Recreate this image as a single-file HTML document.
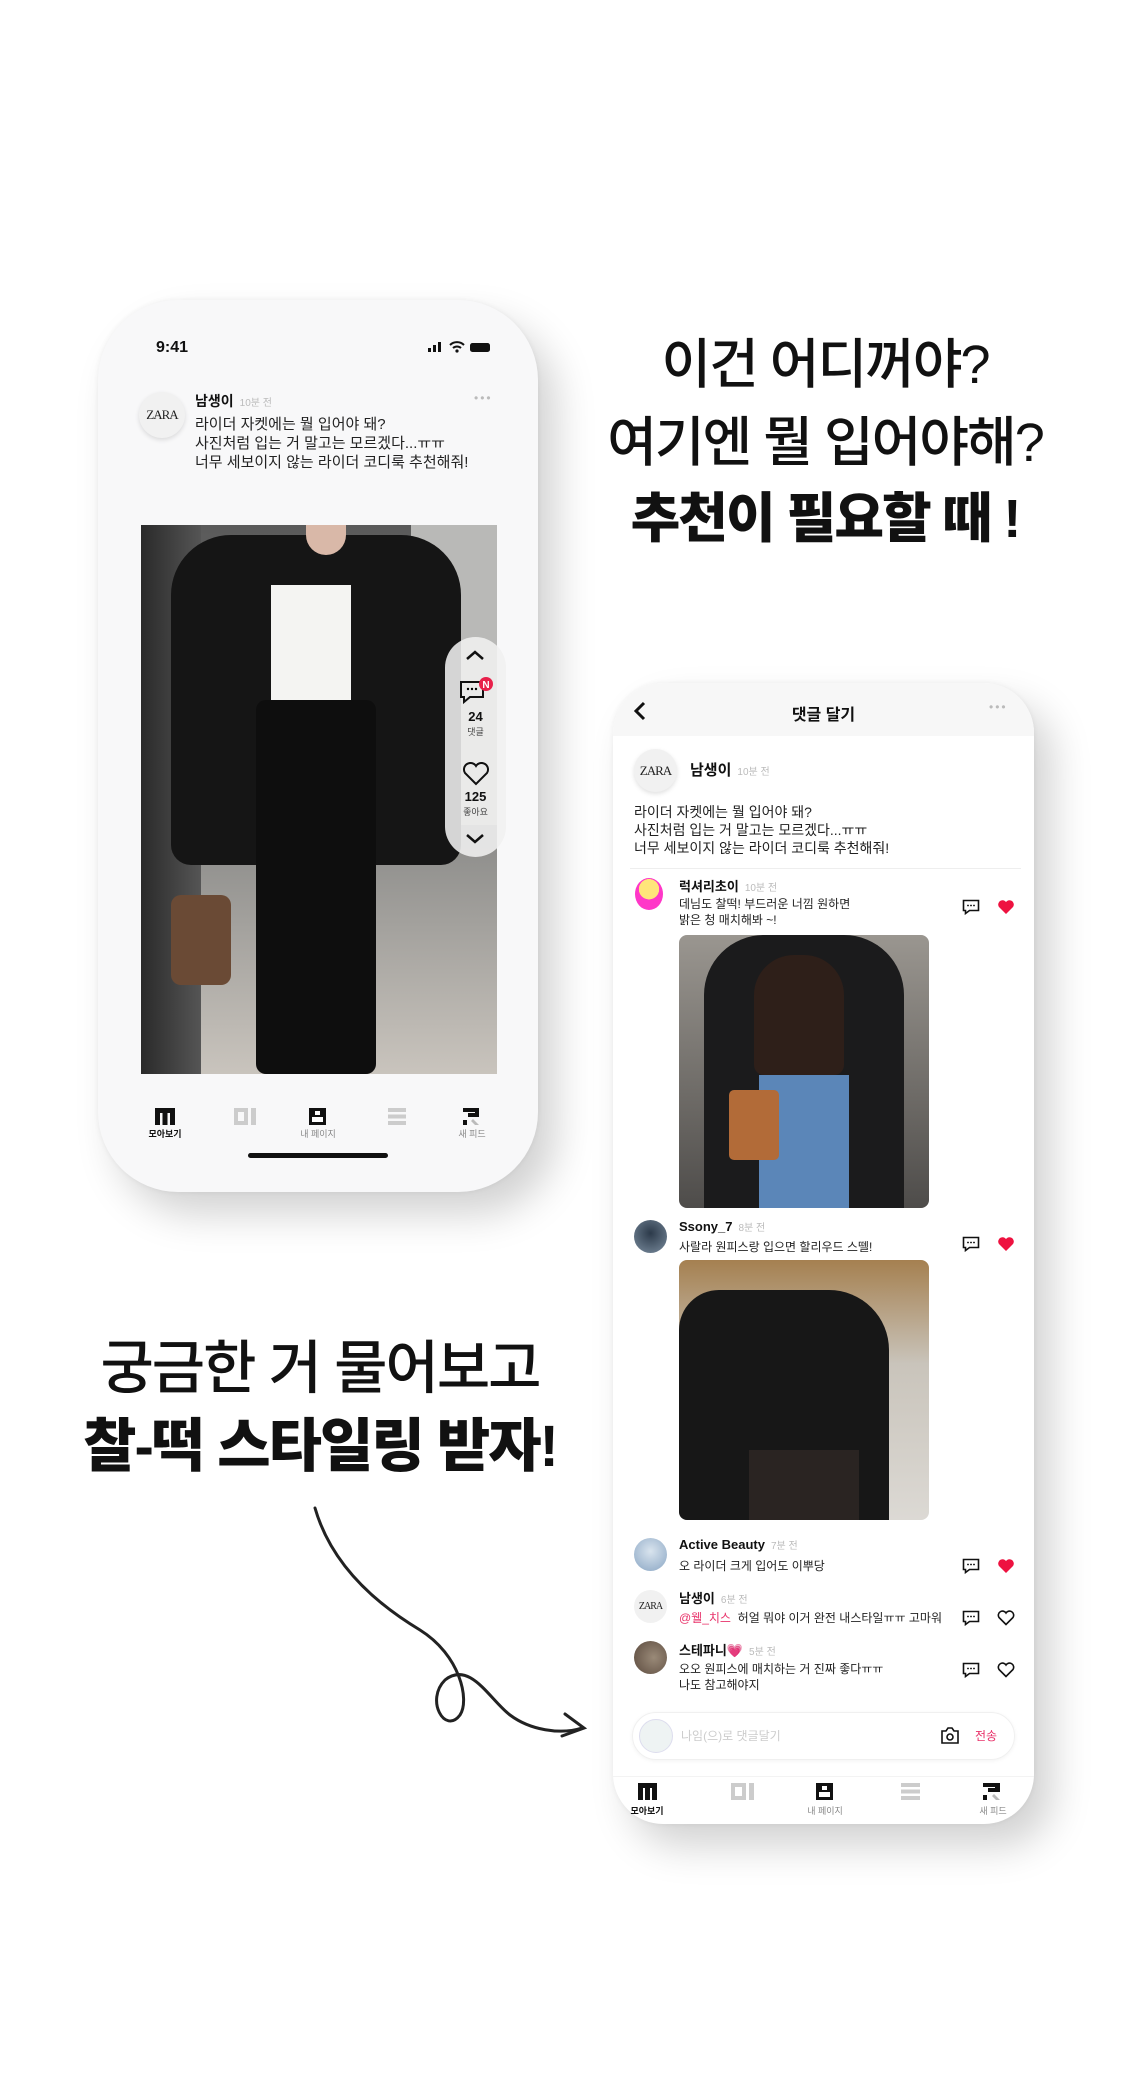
<!DOCTYPE html>
<html><head><meta charset="utf-8">
<style>
*{margin:0;padding:0;box-sizing:border-box}
body{width:1125px;height:2100px;background:#fff;position:relative;overflow:hidden;font-family:"Liberation Sans","Noto Sans CJK KR",sans-serif;color:#111}
.a{position:absolute}
.phone{position:absolute;background:#f7f7f8;box-shadow:18px 22px 40px rgba(0,0,0,.18),0 0 6px rgba(0,0,0,.06)}
.h{font-weight:500;font-size:54px;text-align:center;letter-spacing:-2px;line-height:1}
.t{font-size:15px;line-height:19px;color:#222;white-space:nowrap}
.nm{font-weight:700;font-size:14px;color:#111}
.tm{font-size:10px;color:#bbb;margin-left:6px;font-weight:400}
.av{position:absolute;border-radius:50%;background:#f1f1f1;box-shadow:0 2px 5px rgba(0,0,0,.12);font-family:"Liberation Serif",serif;font-size:13px;display:flex;align-items:center;justify-content:center;letter-spacing:-1px;color:#222}
.nl{position:absolute;font-size:9px;color:#888;text-align:center;width:60px}
</style></head><body>

<div class="a h" style="left:560px;top:338px;width:530px">이건 어디꺼야?</div>
<div class="a h" style="left:560px;top:416px;width:530px">여기엔 뭘 입어야해?</div>
<div class="a h" style="left:560px;top:492px;width:530px;font-weight:900">추천이 필요할 때 !</div>

<div class="a h" style="left:40px;top:1340px;width:560px;font-size:58px">궁금한 거 물어보고</div>
<div class="a h" style="left:40px;top:1418px;width:560px;font-size:58px;font-weight:900">찰-떡 스타일링 받자!</div>

<svg class="a" style="left:310px;top:1500px" width="280" height="240" viewBox="0 0 280 240">
<path d="M5 8 C20 60 60 100 110 130 C150 155 160 200 150 215 C135 235 115 200 135 180 C160 160 180 200 200 215 C220 230 250 235 272 228" fill="none" stroke="#222" stroke-width="3" stroke-linecap="round"/>
<path d="M255 214 L274 228 L252 236" fill="none" stroke="#222" stroke-width="3" stroke-linecap="round"/>
</svg>

<!-- LEFT PHONE -->
<div class="phone" style="left:98px;top:300px;width:440px;height:892px;border-radius:80px;background:#f8f8f9">
  <div class="a" style="left:58px;top:39px;font-weight:700;font-size:16px">9:41</div>
  <svg class="a" style="left:330px;top:40px" width="70" height="14"><rect x="0" y="8" width="3" height="4" fill="#111"/><rect x="5" y="5" width="3" height="7" fill="#111"/><rect x="10" y="2" width="3" height="10" fill="#111"/><path d="M22 5a10 10 0 0 1 14 0M25 8a6 6 0 0 1 8 0" stroke="#111" stroke-width="2" fill="none"/><circle cx="29" cy="11" r="1.6" fill="#111"/><rect x="42" y="3" width="20" height="9" rx="2.5" fill="#111"/></svg>
  <div class="av" style="left:41px;top:92px;width:46px;height:46px">ZARA</div>
  <div class="a nm" style="left:97px;top:91px">남생이<span class="tm">10분 전</span></div>
  <div class="a" style="left:376px;top:91px;color:#bbb;font-size:12px;letter-spacing:2px">•••</div>
  <div class="a t" style="left:97px;top:115px">라이더 자켓에는 뭘 입어야 돼?<br>사진처럼 입는 거 말고는 모르겠다...ㅠㅠ<br>너무 세보이지 않는 라이더 코디룩 추천해줘!</div>
  <div class="a" style="left:43px;top:225px;width:356px;height:549px;overflow:hidden;background:linear-gradient(180deg,#5a5a5a,#8a8a88 55%,#c9c4bd)">
    <div class="a" style="left:0;top:0;width:60px;height:549px;background:linear-gradient(90deg,#2a2a2a,#555)"></div>
    <div class="a" style="left:270px;top:0;width:86px;height:300px;background:#b9b9b7"></div>
    <div class="a" style="left:30px;top:10px;width:290px;height:330px;background:#151515;border-radius:60px 60px 20px 20px"></div>
    <div class="a" style="left:165px;top:0;width:40px;height:30px;background:#d9b8a8;border-radius:0 0 20px 20px"></div>
    <div class="a" style="left:130px;top:60px;width:80px;height:120px;background:#f4f4f2"></div>
    <div class="a" style="left:115px;top:175px;width:120px;height:374px;background:#0e0e0e;border-radius:10px"></div>
    <div class="a" style="left:30px;top:370px;width:60px;height:90px;background:#6a4a35;border-radius:10px"></div>
  </div>
  <div class="a" style="left:347px;top:337px;width:61px;height:220px;border-radius:31px;background:rgba(240,240,240,.88)">
    <svg class="a" style="left:20px;top:12px" width="20" height="12"><path d="M2 10l8-7 8 7" stroke="#111" stroke-width="2.5" fill="none"/></svg>
    <svg class="a" style="left:14px;top:40px" width="36" height="30"><path d="M2 5h22v15h-13l-6 5v-5h-3z" stroke="#111" stroke-width="2" fill="none"/><circle cx="9" cy="12" r="1.2"/><circle cx="13" cy="12" r="1.2"/><circle cx="17" cy="12" r="1.2"/><circle cx="27" cy="7" r="7" fill="#e8204a"/><text x="27" y="11" font-size="10" fill="#fff" text-anchor="middle" font-weight="700" font-family="Liberation Sans">N</text></svg>
    <div class="a" style="left:0;width:61px;top:72px;text-align:center;font-weight:700;font-size:13px">24</div>
    <div class="a" style="left:0;width:61px;top:88px;text-align:center;font-size:9px;color:#444">댓글</div>
    <svg class="a" style="left:17px;top:125px" width="28" height="24"><path d="M14 22L3 11a6 6 0 0 1 11-7a6 6 0 0 1 11 7z" stroke="#111" stroke-width="2" fill="none"/></svg>
    <div class="a" style="left:0;width:61px;top:152px;text-align:center;font-weight:700;font-size:13px">125</div>
    <div class="a" style="left:0;width:61px;top:168px;text-align:center;font-size:9px;color:#444">좋아요</div>
    <svg class="a" style="left:20px;top:196px" width="20" height="12"><path d="M2 2l8 7 8-7" stroke="#111" stroke-width="2.5" fill="none"/></svg>
  </div>
  <!-- nav -->
  <svg class="a" style="left:57px;top:808px" width="20" height="17"><path d="M0 0h20v17h-5v-12h-2.5v12h-5v-12h-2.5v12h-5z" fill="#111"/></svg>
  <svg class="a" style="left:136px;top:808px" width="22" height="17"><path d="M0 0h14v17h-14zM4 4v9h6v-9zM17 0h5v17h-5z" fill="#ccc" fill-rule="evenodd"/></svg>
  <svg class="a" style="left:211px;top:808px" width="17" height="17"><rect width="17" height="17" fill="#111"/><rect x="6" y="3" width="5" height="4" fill="#fff"/><rect x="3" y="9" width="11" height="5" fill="#fff"/></svg>
  <svg class="a" style="left:290px;top:808px" width="18" height="17"><rect width="18" height="4" fill="#ccc"/><rect y="6.5" width="18" height="4" fill="#ccc"/><rect y="13" width="18" height="4" fill="#ccc"/></svg>
  <svg class="a" style="left:365px;top:808px" width="18" height="17"><path d="M0 0h16v9h-11v-4h7v-1h-12z" fill="#111"/><rect x="0" y="12" width="4" height="5" fill="#111"/><path d="M10 11l6 6h-4l-4-4z" fill="#bbb"/></svg>
  <div class="nl" style="left:37px;top:827px;color:#111;font-weight:700">모아보기</div>
  <div class="nl" style="left:190px;top:827px">내 페이지</div>
  <div class="nl" style="left:344px;top:827px">새 피드</div>
  <div class="a" style="left:150px;top:853px;width:140px;height:5px;border-radius:3px;background:#111"></div>
</div>

<!-- RIGHT PHONE -->
<div class="phone" style="left:613px;top:683px;width:421px;height:1141px;border-radius:50px;background:#fff">
  <div class="a" style="left:0;top:0;width:421px;height:53px;background:#f7f7f7;border-radius:50px 50px 0 0"></div>
  <svg class="a" style="left:20px;top:18px" width="14" height="20"><path d="M11 2L3 10l8 8" stroke="#111" stroke-width="3" fill="none"/></svg>
  <div class="a" style="left:0;width:421px;top:18px;text-align:center;font-weight:700;font-size:16px">댓글 달기</div>
  <div class="a" style="left:376px;top:17px;color:#bbb;font-size:12px;letter-spacing:2px">•••</div>
  <div class="av" style="left:21px;top:66px;width:43px;height:43px">ZARA</div>
  <div class="a nm" style="left:77px;top:76px;font-size:15px">남생이<span class="tm">10분 전</span></div>
  <div class="a t" style="left:21px;top:120px;font-size:14px;line-height:18px">라이더 자켓에는 뭘 입어야 돼?<br>사진처럼 입는 거 말고는 모르겠다...ㅠㅠ<br>너무 세보이지 않는 라이더 코디룩 추천해줘!</div>
  <div class="a" style="left:17px;top:185px;width:391px;height:1px;background:#eee"></div>

  <!-- comment 1 -->
  <div class="a" style="left:22px;top:195px;width:28px;height:32px;border-radius:50%;background:radial-gradient(circle at 50% 35%,#ffe57a 40%,#ff37c8 41%);"></div>
  <div class="a nm" style="left:66px;top:193px;font-size:13px">럭셔리초이<span class="tm">10분 전</span></div>
  <div class="a t" style="left:66px;top:213px;font-size:12px;line-height:16px">데님도 찰떡! 부드러운 너낌 원하면<br>밝은 청 매치해봐 ~!</div>
  <div class="a" style="left:66px;top:252px;width:250px;height:273px;border-radius:8px;overflow:hidden;background:linear-gradient(180deg,#9a9690,#6d6a66 60%,#4e4c4a)">
    <div class="a" style="left:25px;top:0;width:200px;height:273px;background:#1b1b1c;border-radius:60px 60px 0 0"></div>
    <div class="a" style="left:75px;top:20px;width:90px;height:120px;background:#2e1f19;border-radius:40px 40px 10px 10px"></div>
    <div class="a" style="left:80px;top:140px;width:90px;height:133px;background:#5b86b8"></div>
    <div class="a" style="left:50px;top:155px;width:50px;height:70px;background:#b26b38;border-radius:5px"></div>
  </div>

  <!-- comment 2 -->
  <div class="a" style="left:21px;top:537px;width:33px;height:33px;border-radius:50%;background:radial-gradient(circle at 50% 40%,#2c3a4a,#7a8c9e)"></div>
  <div class="a nm" style="left:66px;top:536px;font-size:13px">Ssony_7<span class="tm">8분 전</span></div>
  <div class="a t" style="left:66px;top:556px;font-size:12px;line-height:16px">사랄라 원피스랑 입으면 할리우드 스뗄!</div>
  <div class="a" style="left:66px;top:577px;width:250px;height:260px;border-radius:8px;overflow:hidden;background:linear-gradient(180deg,#a58050,#c9c4bb 40%,#dcd9d4)">
    <div class="a" style="left:0;top:30px;width:210px;height:230px;background:#171717;border-radius:40px 60px 0 0"></div>
    <div class="a" style="left:70px;top:190px;width:110px;height:70px;background:#2a2422"></div>
  </div>

  <!-- icons rows -->
  <svg class="a" style="left:349px;top:216px" width="18" height="16"><path d="M1.5 1.5h15v10h-9l-4 3v-3h-2z" stroke="#111" stroke-width="1.6" fill="none"/><circle cx="6" cy="6.5" r=".9"/><circle cx="9" cy="6.5" r=".9"/><circle cx="12" cy="6.5" r=".9"/></svg>
  <svg class="a" style="left:384px;top:216px" width="18" height="16"><path d="M9 15L2 8a4 4 0 0 1 7-5a4 4 0 0 1 7 5z" fill="#ee1240"/></svg>
  <svg class="a" style="left:349px;top:553px" width="18" height="16"><path d="M1.5 1.5h15v10h-9l-4 3v-3h-2z" stroke="#111" stroke-width="1.6" fill="none"/><circle cx="6" cy="6.5" r=".9"/><circle cx="9" cy="6.5" r=".9"/><circle cx="12" cy="6.5" r=".9"/></svg>
  <svg class="a" style="left:384px;top:553px" width="18" height="16"><path d="M9 15L2 8a4 4 0 0 1 7-5a4 4 0 0 1 7 5z" fill="#ee1240"/></svg>

  <div class="a" style="left:21px;top:855px;width:33px;height:33px;border-radius:50%;background:radial-gradient(circle at 50% 40%,#d9e4ee,#8aa6c4)"></div>
  <div class="a nm" style="left:66px;top:854px;font-size:13px">Active Beauty<span class="tm">7분 전</span></div>
  <div class="a t" style="left:66px;top:874px;font-size:12px">오 라이더 크게 입어도 이뿌당</div>
  <svg class="a" style="left:349px;top:875px" width="18" height="16"><path d="M1.5 1.5h15v10h-9l-4 3v-3h-2z" stroke="#111" stroke-width="1.6" fill="none"/><circle cx="6" cy="6.5" r=".9"/><circle cx="9" cy="6.5" r=".9"/><circle cx="12" cy="6.5" r=".9"/></svg>
  <svg class="a" style="left:384px;top:875px" width="18" height="16"><path d="M9 15L2 8a4 4 0 0 1 7-5a4 4 0 0 1 7 5z" fill="#ee1240"/></svg>

  <div class="av" style="left:21px;top:907px;width:33px;height:33px;box-shadow:none;font-size:10px">ZARA</div>
  <div class="a nm" style="left:66px;top:905px;font-size:13px">남생이<span class="tm">6분 전</span></div>
  <div class="a t" style="left:66px;top:926px;font-size:12px"><span style="color:#e8326a">@웰_치스</span>&nbsp; 허얼 뭐야 이거 완전 내스타일ㅠㅠ 고마워</div>
  <svg class="a" style="left:349px;top:927px" width="18" height="16"><path d="M1.5 1.5h15v10h-9l-4 3v-3h-2z" stroke="#111" stroke-width="1.6" fill="none"/><circle cx="6" cy="6.5" r=".9"/><circle cx="9" cy="6.5" r=".9"/><circle cx="12" cy="6.5" r=".9"/></svg>
  <svg class="a" style="left:384px;top:927px" width="18" height="16"><path d="M9 14.5L2 7.5a4 4 0 0 1 7-4.5a4 4 0 0 1 7 4.5z" fill="none" stroke="#111" stroke-width="1.6"/></svg>

  <div class="a" style="left:21px;top:958px;width:33px;height:33px;border-radius:50%;background:radial-gradient(circle at 60% 50%,#9a8a78,#5b4a3e)"></div>
  <div class="a nm" style="left:66px;top:957px;font-size:13px">스테파니<span style="color:#f05aa8">💗</span><span class="tm">5분 전</span></div>
  <div class="a t" style="left:66px;top:978px;font-size:12px;line-height:16px">오오 원피스에 매치하는 거 진짜 좋다ㅠㅠ<br>나도 참고해야지</div>
  <svg class="a" style="left:349px;top:979px" width="18" height="16"><path d="M1.5 1.5h15v10h-9l-4 3v-3h-2z" stroke="#111" stroke-width="1.6" fill="none"/><circle cx="6" cy="6.5" r=".9"/><circle cx="9" cy="6.5" r=".9"/><circle cx="12" cy="6.5" r=".9"/></svg>
  <svg class="a" style="left:384px;top:979px" width="18" height="16"><path d="M9 14.5L2 7.5a4 4 0 0 1 7-4.5a4 4 0 0 1 7 4.5z" fill="none" stroke="#111" stroke-width="1.6"/></svg>

  <div class="a" style="left:19px;top:1029px;width:383px;height:48px;border-radius:24px;border:1px solid #f0f0f0;box-shadow:0 1px 4px rgba(0,0,0,.05)">
    <div class="a" style="left:6px;top:6px;width:34px;height:34px;border-radius:50%;background:#eef3f3;border:1px solid #dde"></div>
    <div class="a" style="left:48px;top:14px;font-size:12px;color:#ccc">나임(으)로 댓글달기</div>
    <svg class="a" style="left:308px;top:14px" width="18" height="17"><path d="M1 4h4l2-3h4l2 3h4v12h-16z" fill="none" stroke="#111" stroke-width="1.6"/><circle cx="9" cy="10" r="3" fill="none" stroke="#111" stroke-width="1.6"/></svg>
    <div class="a" style="left:342px;top:14px;font-size:12px;color:#e8326a">전송</div>
  </div>
  <div class="a" style="left:0;top:1093px;width:421px;height:1px;background:#f3f3f3"></div>
  <svg class="a" style="left:25px;top:1100px" width="19" height="17"><path d="M0 0h19v17h-5v-12h-2v12h-5v-12h-2v12h-5z" fill="#111"/></svg>
  <svg class="a" style="left:118px;top:1100px" width="24" height="17"><path d="M0 0h15v17h-15zM4 4v9h7v-9zM18 0h5v17h-5z" fill="#ccc" fill-rule="evenodd"/></svg>
  <svg class="a" style="left:203px;top:1100px" width="17" height="17"><rect width="17" height="17" fill="#111"/><rect x="6" y="3" width="5" height="4" fill="#fff"/><rect x="3" y="9" width="11" height="5" fill="#fff"/></svg>
  <svg class="a" style="left:288px;top:1100px" width="19" height="17"><rect width="19" height="4" fill="#ccc"/><rect y="6.5" width="19" height="4" fill="#ccc"/><rect y="13" width="19" height="4" fill="#ccc"/></svg>
  <svg class="a" style="left:370px;top:1100px" width="19" height="17"><path d="M0 0h17v9h-12v-4h7v-1h-12z" fill="#111"/><rect x="0" y="12" width="4" height="5" fill="#111"/><path d="M11 11l6 6h-4l-4-4z" fill="#bbb"/></svg>
  <div class="nl" style="left:4px;top:1121px;color:#111;font-weight:700">모아보기</div>
  <div class="nl" style="left:182px;top:1121px">내 페이지</div>
  <div class="nl" style="left:350px;top:1121px">새 피드</div>
</div>
</body></html>
